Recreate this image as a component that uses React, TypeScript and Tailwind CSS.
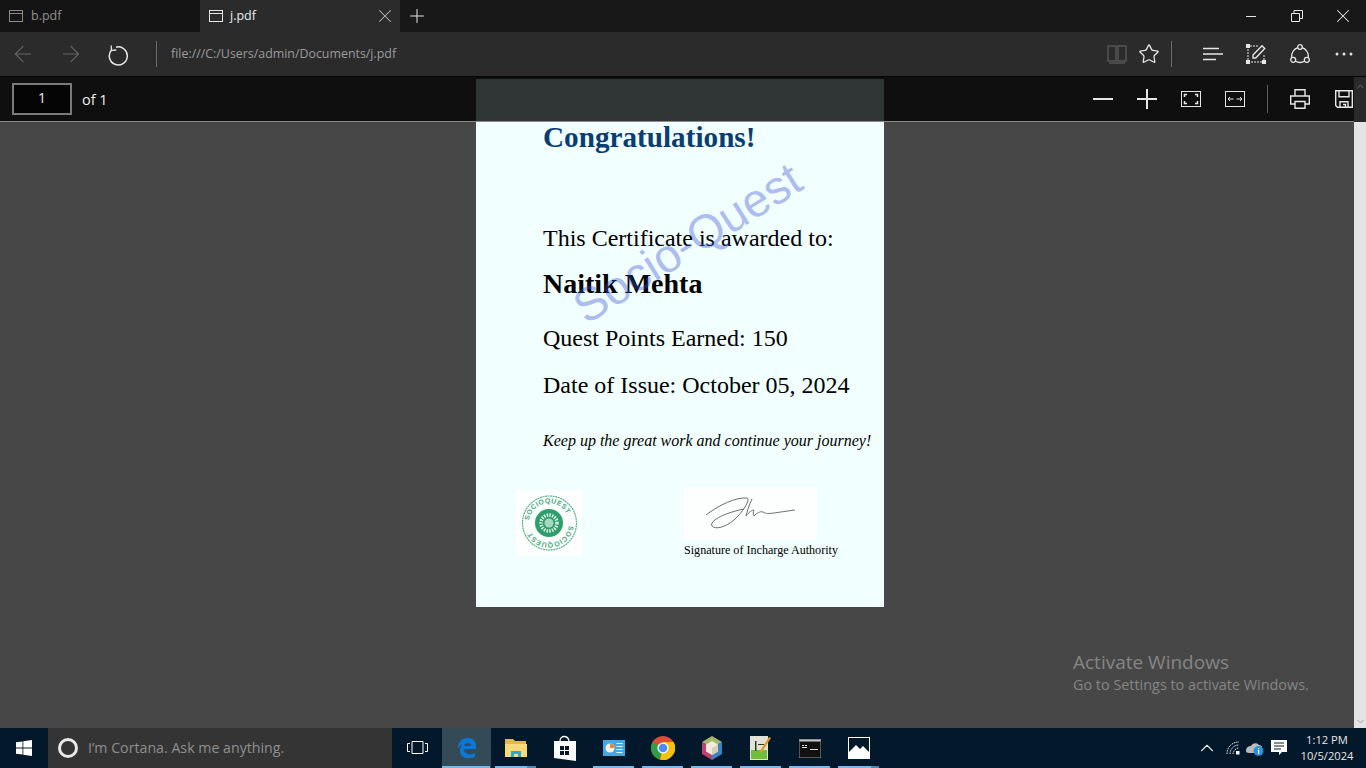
import React from "react";
import { ArrowLeft, ArrowRight, Plus, X, Star, ChevronUp, ChevronDown } from "lucide-react";

const UI = "font-['Open_Sans','Noto_Sans',sans-serif]";
const SERIF = "font-['Liberation_Serif',serif]";

const TabIcon = ({ on }: { on?: boolean }) => (
  <svg width="16" height="14" viewBox="0 0 16 14" fill="none" stroke={on ? "#e6e6e6" : "#8a8a8a"} strokeWidth="1">
    <rect x="1.5" y="1.5" width="13" height="11" />
    <path d="M1.5 4.5h13" />
  </svg>
);

const Reload = () => (
  <svg width="22" height="22" viewBox="0 0 22 22" fill="none" stroke="#e6e6e6" strokeWidth="1.500">
    <path d="M8 3.200A9 9 0 1 1 3.500 6" />
    <path d="M3.200 1.500 3.500 6.300l4.800-.3" strokeWidth="1.300" />
  </svg>
);

const Reading = () => (
  <svg width="20" height="20" viewBox="0 0 20 20" fill="none" stroke="#555" strokeWidth="1.500">
    <path d="M1 2h8v15H1zM11 2h8v15h-8zM2 19h16" />
  </svg>
);

const Restore = () => (
  <svg width="12" height="12" viewBox="0 0 12 12" fill="none" stroke="#e6e6e6">
    <path d="M.5 3.5h8v8h-8zM3 3V.5h8.500v8H9" />
  </svg>
);

const Hub = () => (
  <svg width="20" height="14" viewBox="0 0 20 14" stroke="#e6e6e6" strokeWidth="1.400">
    <path d="M0 1.500h16M0 7h20M0 12.500h13" />
  </svg>
);

const Note = () => (
  <svg width="20" height="20" viewBox="0 0 20 20" fill="none" stroke="#e6e6e6">
    <path d="M4 2h9M2 5v11M18 11v5M5 18h11" strokeDasharray="2 1" />
    <path d="M7 14v-3l9-9.200 2.700 2.700-9 9.500z" strokeWidth="1.400" />
    <g fill="#e6e6e6" stroke="none">
      <rect x="0" y="0" width="4" height="4" />
      <rect x="0" y="16" width="4" height="4" />
      <rect x="16" y="16" width="4" height="4" />
    </g>
  </svg>
);

const Share = () => (
  <svg width="20" height="20" viewBox="0 0 20 20" fill="none" stroke="#e6e6e6" strokeWidth="1.300">
    <circle cx="10" cy="3" r="2.300" />
    <circle cx="3.200" cy="15.800" r="2.500" />
    <circle cx="16.800" cy="15.800" r="2.500" />
    <path d="M12.200 3.600a9 9 0 0 1 6 10M7.800 3.600a9 9 0 0 0-6 10M5.500 17.300a9.500 9.500 0 0 0 9 0" />
  </svg>
);

const Dots = () => (
  <svg width="18" height="4" viewBox="0 0 18 4" fill="#e6e6e6">
    <circle cx="2" cy="2" r="1.500" />
    <circle cx="9" cy="2" r="1.500" />
    <circle cx="16" cy="2" r="1.500" />
  </svg>
);

const ZoomOut = () => (
  <svg width="20" height="20" viewBox="0 0 20 20" stroke="#e6e6e6" strokeWidth="2">
    <path d="M0 10h20" />
  </svg>
);

const ZoomIn = () => (
  <svg width="20" height="20" viewBox="0 0 20 20" stroke="#e6e6e6" strokeWidth="2">
    <path d="M0 10h20M10 0v20" />
  </svg>
);

const FitPage = () => (
  <svg width="20" height="16" viewBox="0 0 20 16" fill="none" stroke="#e6e6e6">
    <rect x=".5" y=".5" width="19" height="15" />
    <path d="M3.500 6V3.500H6M14 3.500h2.500V6M16.500 10v2.500H14M6 12.500H3.500V10" strokeWidth="1.500" />
  </svg>
);

const FitWidth = () => (
  <svg width="20" height="16" viewBox="0 0 20 16" fill="none" stroke="#e6e6e6">
    <rect x=".5" y=".5" width="19" height="15" />
    <path d="M3 8h5.500M11.500 8H17M5 6 3 8l2 2M15 6l2 2-2 2" />
  </svg>
);

const PrintIcon = () => (
  <svg width="20" height="20" viewBox="0 0 20 20" fill="none" stroke="#e6e6e6" strokeWidth="1.400">
    <path d="M5 7V.7h10V7M5 15H.7V7h18.600v8H15" />
    <path d="M5 12.500h10v6.800H5z" />
  </svg>
);

const SaveIcon = () => (
  <svg width="18" height="18" viewBox="0 0 18 18" fill="none" stroke="#e6e6e6" strokeWidth="1.400">
    <path d="M.7.700h16.600v16.600H2.500L.7 15.500z" />
    <path d="M4 .7v6h10v-6M5 17.300v-5.500h8v5.500M8 14.500h2.500v2.800" />
  </svg>
);

const Seal = () => (
  <svg width="66" height="66" viewBox="0 0 66 66" className="bg-[#fdfffe]">
    <defs>
      <path id="sealTop" d="M13 33a20 20 0 0 1 40 0" />
      <path id="sealBottom" d="M53 33a20 20 0 0 1-40 0" />
    </defs>
    <circle cx="33.500" cy="33" r="27" fill="none" stroke="#55b088" strokeWidth="1.200" strokeDasharray="2 .6" />
    <text fontSize="7" fontWeight="700" fill="#4aa77d" fontFamily="Liberation Sans, sans-serif" letterSpacing=".4">
      <textPath href="#sealTop" startOffset="4%">SOCIOQUEST</textPath>
    </text>
    <text fontSize="7" fontWeight="700" fill="#4aa77d" fontFamily="Liberation Sans, sans-serif" letterSpacing=".4">
      <textPath href="#sealBottom" startOffset="4%">SOCIOQUEST</textPath>
    </text>
    <circle cx="33" cy="33" r="14" fill="#2f9e6b" />
    <circle cx="33" cy="33" r="8" fill="none" stroke="#d8f0e3" strokeWidth="3.500" strokeDasharray="1.500 1.200" />
    <circle cx="33" cy="33" r="4.500" fill="#a8d9bf" />
  </svg>
);

const Signature = () => (
  <svg width="133" height="53" viewBox="0 0 133 53" className="bg-[#fdffff]" fill="none" stroke="#6b6b6b">
    <path d="M22 28C35 18 52 10 63 11c4 1-4 14-13 22-8 7-19 10-22 6-3-5 12-13 32-17" strokeWidth="1" />
    <path d="M68 12c-3 6-5 13-6 17 3-4 6-6 8-6-1 2-1 4 0 6 3-3 6-5 9-4 4 3 9 1 32-2" strokeWidth="1" />
  </svg>
);

const Edge = () => (
  <svg width="20" height="22" viewBox="0 0 20 22">
    <path d="M1 11C1 5 5 1 11 1c5 0 9 4 8 11H7c0 5 6 7 11 4v4c-7 3-15 1-15-6 0-3 1-5 3-7-2 1-4 3-5 4zm6-2h7c0-4-6-4-7 0z" fill="#0b78d7" />
  </svg>
);

const Folder = () => (
  <svg width="22" height="20" viewBox="0 0 22 20">
    <path d="M0 1h8l2 2h11v4H0z" fill="#e8b93f" />
    <path d="M0 6h22v13H0z" fill="#fbd878" />
    <path d="M6 13h10v6h-3v-3H9v3H6z" fill="#27a9e0" />
  </svg>
);

const Store = () => (
  <svg width="22" height="26" viewBox="0 0 22 26">
    <path d="M6 6c0-6 8-6 9 0" fill="none" stroke="#fff" strokeWidth="1.300" />
    <path d="M0 6h22v20L0 23z" fill="#fff" />
    <path d="M6 11h4v4H6zM11 11h4v4h-4zM6 16h4v4H6zM11 16h4v4h-4z" fill="#03182a" />
  </svg>
);

const Panel = () => (
  <svg width="22" height="16" viewBox="0 0 22 16">
    <rect width="22" height="16" fill="#43a9e6" />
    <circle cx="7" cy="8" r="4.500" fill="#f7f2dc" />
    <path d="M7 8V3.500A4.500 4.500 0 0 1 11.500 8z" fill="#e8873a" />
    <path d="M13.500 3.500h6M13.500 6.500h6M13.500 9.500h6M13.500 12.500h6" stroke="#e6f5ff" />
  </svg>
);

const Chrome = () => (
  <svg width="24" height="24" viewBox="0 0 24 24">
    <circle cx="12" cy="12" r="12" fill="#dd4b3e" />
    <path d="M12 12 1.600 6A12 12 0 0 0 9 23.600z" fill="#2f9e44" />
    <path d="M12 6h10.500A12 12 0 0 1 9 23.600L12 12z" fill="#f4c20d" />
    <circle cx="12" cy="12" r="5.600" fill="#fff" />
    <circle cx="12" cy="12" r="4.300" fill="#4a8bf5" />
  </svg>
);

const Cube = () => (
  <svg width="22" height="24" viewBox="0 0 22 24">
    <path d="M11 0 21 6 11 12 1 6z" fill="#a3b86c" />
    <path d="M1 6l10 6v12L1 18z" fill="#b8446f" />
    <path d="M21 6 11 12v12l10-6z" fill="#3f82c4" />
    <path d="M11 5l6 3.500v7L11 19l-6-3.500v-7z" fill="#f0ecdd" />
    <path d="M11 12l6-3.500v7L11 19z" fill="#d6cfb8" />
  </svg>
);

const Notepad = () => (
  <svg width="22" height="24" viewBox="0 0 22 24">
    <path d="M0 0h18v24H0z" fill="#dfe4d6" />
    <path d="M1 14h16v9H1z" fill="#6fbf3c" />
    <path d="M5 5h1.500v10H5zM8 8h6v1H8z" fill="#2e3b20" />
    <path d="M19 1l2 1-9 14-2 1 .5-3z" fill="#e29a2d" />
  </svg>
);

const Terminal = () => (
  <svg width="22" height="19" viewBox="0 0 22 19">
    <rect width="22" height="19" fill="#111" stroke="#9a9a9a" />
    <rect x=".5" y=".5" width="21" height="2" fill="#c9c9c9" />
    <path d="M3 6h2v1H3zM6 6h2v1H6zM3 8h5v1H3zM11 10h8v1h-8z" fill="#dcdcdc" />
  </svg>
);

const Photos = () => (
  <svg width="22" height="22" viewBox="0 0 22 22">
    <rect x=".5" y=".5" width="21" height="21" fill="#03182a" stroke="#fff" />
    <path d="M1 21v-6l7-7 4 4 3-3 6 6v6z" fill="#fff" />
  </svg>
);

const Wifi = () => (
  <svg width="14" height="14" viewBox="0 0 14 14" fill="none" stroke="#e6e6e6">
    <path d="M1 13C1 6 6 1 13 1M4 13c0-5 4-9 9-9M7 13c0-3 3-6 6-6" strokeDasharray="1.500 .8" />
    <rect x="10" y="10" width="3.500" height="3.500" fill="#fff" stroke="none" />
  </svg>
);

const Cloud = () => (
  <svg width="18" height="15" viewBox="0 0 18 15">
    <path d="M0 10c0-4 3-5 5-5 1-3 6-4 8-1 2 0 3 1 3 3v5H3c-2 0-3-1-3-2z" fill="#b9bcbf" />
    <circle cx="12.500" cy="10" r="5" fill="#2b8fe0" />
    <path d="M12 9h1.200v4H12zM12 7h1.200v1.200H12z" fill="#fff" />
  </svg>
);

const Action = () => (
  <svg width="16" height="16" viewBox="0 0 16 16">
    <path d="M0 0h16v12h-5l-3 3v-3H0z" fill="#fff" />
    <path d="M3 3h10M3 6h10M3 9h7" stroke="#03182a" />
  </svg>
);

const taskIcons = [
  { el: <Edge />, active: true },
  { el: <Folder />, bar: true, split: "folder" },
  { el: <Store /> },
  { el: <Panel />, bar: true },
  { el: <Chrome />, bar: true },
  { el: <Cube />, bar: true },
  { el: <Notepad />, bar: true },
  { el: <Terminal />, bar: true },
  { el: <Photos />, bar: true, split: "photos" },
];

export default function App() {
  return (
    <div className={`w-[1366px] h-[768px] overflow-hidden flex flex-col bg-[#474747] ${UI}`}>
      {/* tabs */}
      <div className="h-8 shrink-0 flex bg-[#181818] text-[12.500px]">
        <div className="w-[200px] flex items-center gap-[7px] pl-[8px] text-[#8f8f8f] bg-[#141414]">
          <TabIcon />
          <span>b.pdf</span>
        </div>
        <div className="w-[200px] flex items-center bg-[#2b2b2b] pl-[8px] text-[#ececec]">
          <TabIcon on />
          <span className="ml-[6px]">j.pdf</span>
          <X size={22} strokeWidth={1.100} className="ml-auto mr-[4px] text-[#b5b5b5]" />
        </div>
        <div className="w-[34px] flex items-center justify-center">
          <Plus size={22} strokeWidth={1.100} className="text-[#e6e6e6]" />
        </div>
        <div className="ml-auto flex items-center text-[#e6e6e6]">
          <div className="w-[46px] flex justify-center">
            <div className="w-[10px] h-px bg-[#e6e6e6]" />
          </div>
          <div className="w-[46px] flex justify-center">
            <Restore />
          </div>
          <div className="w-[46px] flex justify-center">
            <X size={22} strokeWidth={1.100} />
          </div>
        </div>
      </div>

      {/* address bar */}
      <div className="h-[45px] shrink-0 flex items-center bg-[#2b2b2b] border-b border-[#050505] pl-[10px] pr-[13px]">
        <ArrowLeft size={26} strokeWidth={1} className="text-[#666]" />
        <ArrowRight size={26} strokeWidth={1} className="text-[#666] ml-[22px]" />
        <div className="ml-[24px] mt-[1px]"><Reload /></div>
        <div className="w-px h-[26px] bg-[#6a6a6a] ml-[26px]" />
        <span className="ml-[14px] mt-[1px] text-[12.400px] text-[#9b9b9b]">file:///C:/Users/admin/Documents/j.pdf</span>
        <div className="ml-auto flex items-center">
          <Reading />
          <Star size={22} strokeWidth={1.400} className="text-[#e6e6e6] ml-[11px]" />
          <div className="w-px h-[26px] bg-[#6a6a6a] ml-[11px]" />
          <div className="ml-[31px]"><Hub /></div>
          <div className="ml-[23px]"><Note /></div>
          <div className="ml-[24px]"><Share /></div>
          <div className="ml-[25px]"><Dots /></div>
        </div>
      </div>

      {/* pdf viewer */}
      <div className="relative flex-1 min-h-0 flex justify-center">
        <div className="relative z-0 w-[408px] h-[528px] mt-[2px] mr-[6px] bg-[#f1ffff] shrink-0 pl-[67px] text-black">
          <div className={`pt-[41px] text-[29.200px] leading-[34px] font-bold text-[#0a3d73] ${SERIF}`}>Congratulations!</div>
          <div className={`mt-[69px] text-[24px] leading-[30px] ${SERIF}`}>This Certificate is awarded to:</div>
          <div className={`mt-[15px] text-[28px] leading-[32px] font-bold ${SERIF}`}>Naitik Mehta</div>
          <div className={`mt-[23px] text-[24px] leading-[30px] ${SERIF}`}>Quest Points Earned: 150</div>
          <div className={`mt-[17px] text-[24px] leading-[30px] ${SERIF}`}>Date of Issue: October 05, 2024</div>
          <div className={`mt-[31px] text-[16px] leading-[20px] italic whitespace-nowrap ${SERIF}`}>Keep up the great work and continue your journey!</div>
          <div className="mt-[36px] ml-[-27px] flex items-start">
            <div className="mt-[3px]"><Seal /></div>
            <div className="ml-[102px]">
              <Signature />
              <div className={`mt-[2px] text-[12.100px] leading-[16px] whitespace-nowrap ${SERIF}`}>Signature of Incharge Authority</div>
            </div>
          </div>
          {/* watermark lies over the page text */}
          <div className="absolute left-[82px] top-[137px] -rotate-[32deg] font-['Liberation_Sans',sans-serif] text-[47px] leading-[54px] text-[#3c50d2]/40 whitespace-nowrap">Socio-Quest</div>
        </div>

        {/* pdf toolbar over the page */}
        <div className="absolute z-10 inset-x-0 top-0 h-[45px] bg-[#0f0f0f] border-b border-[#8a8a8a] flex items-center pl-[12px]">
          <div className="w-[60px] h-[32px] border-2 border-[#7a7a7a] bg-[#050505] flex items-center justify-center text-[14px] text-[#ededed] pb-[3px]">1</div>
          <span className="ml-[10px] mt-[1px] text-[14.500px] text-[#ededed]">of 1</span>
          <div className="ml-auto flex items-center pr-[13px]">
            <ZoomOut />
            <div className="ml-[24px]"><ZoomIn /></div>
            <div className="ml-[24px]"><FitPage /></div>
            <div className="ml-[24px]"><FitWidth /></div>
            <div className="w-px h-[28px] bg-[#5f5f5f] ml-[22px]" />
            <div className="ml-[22px]"><PrintIcon /></div>
            <div className="ml-[25px]"><SaveIcon /></div>
          </div>
        </div>
        <div className="absolute z-20 left-[476px] top-[2px] w-[408px] h-[42px] bg-[#303535]" />

        {/* scrollbar */}
        <div className="absolute z-30 right-0 top-0 bottom-0 w-[12px] flex flex-col">
          <div className="h-[45px] bg-[#2a2a2a] flex justify-center text-[#6f6f6f]">
            <ChevronUp size={11} strokeWidth={2} className="mt-[4px]" />
          </div>
          <div className="flex-1 bg-[#e4e4e4] flex justify-center items-end text-[#9a9a9a]">
            <ChevronDown size={11} strokeWidth={2} className="mb-[1px]" />
          </div>
        </div>

        {/* activation notice */}
        <div className="absolute z-20 left-[1073px] top-[572px] text-[#858585]">
          <div className="text-[19px] leading-[26px]">Activate Windows</div>
          <div className="text-[14.400px] leading-[20px]">Go to Settings to activate Windows.</div>
        </div>
      </div>

      {/* taskbar */}
      <div className="h-10 shrink-0 flex items-stretch bg-[#03182a] text-white">
        <div className="w-[48px] flex items-center justify-center">
          <svg width="16" height="16" viewBox="0 0 16 16" fill="#fff">
            <path d="M0 2.300 6.500 1.400v6.200H0zM7.300 1.300 16 0v7.600H7.300zM0 8.400h6.500v6.200L0 13.700zM7.300 8.400H16V16l-8.700-1.300z" />
          </svg>
        </div>
        <div className="w-[344px] bg-[#343434] flex items-center pl-[10px]">
          <div className="w-[20px] h-[20px] rounded-full border-[3px] border-[#e8e8e8]" />
          <span className="ml-[10px] text-[14.200px] text-[#8f8f8f]">I’m Cortana. Ask me anything.</span>
        </div>
        <div className="w-[50px] flex items-center justify-center">
          <svg width="21" height="14" viewBox="0 0 21 14" fill="none" stroke="#fff">
            <path d="M5 .5h11v12H5zM3 2.500H.5v8H3M18 2.500h2.500v8H18" />
          </svg>
        </div>
        {taskIcons.map((t, i) => (
          <div key={i} className={`relative w-[49px] flex items-center justify-center ${t.active ? "bg-[#344a57]" : ""}`}>
            {t.el}
            {t.active && <div className="absolute bottom-0 left-0 right-[1px] h-[2px] bg-[#76b9ed]" />}
            {t.bar && <div className="absolute bottom-0 left-[4px] right-[4px] h-[2px] bg-[#76b9ed]" />}
            {t.split === "folder" && <div className="absolute bottom-0 right-[4px] w-[9px] h-[2px] bg-[#4d87b3]" />}
            {t.split === "photos" && <div className="absolute bottom-0 right-[4px] w-[8px] h-[2px] bg-[#4d87b3]" />}
          </div>
        ))}
        <div className="ml-auto flex items-center">
          <ChevronUp size={22} strokeWidth={1.200} className="text-[#e6e6e6]" />
          <div className="ml-[8px]"><Wifi /></div>
          <div className="ml-[6px]"><Cloud /></div>
          <div className="ml-[7px]"><Action /></div>
          <div className="w-[70px] ml-[5px] text-center text-[11.200px] leading-[16px] text-[#e6e6e6]">
            <div>1:12 PM</div>
            <div>10/5/2024</div>
          </div>
          <div className="w-[4px]" />
        </div>
      </div>
    </div>
  );
}
